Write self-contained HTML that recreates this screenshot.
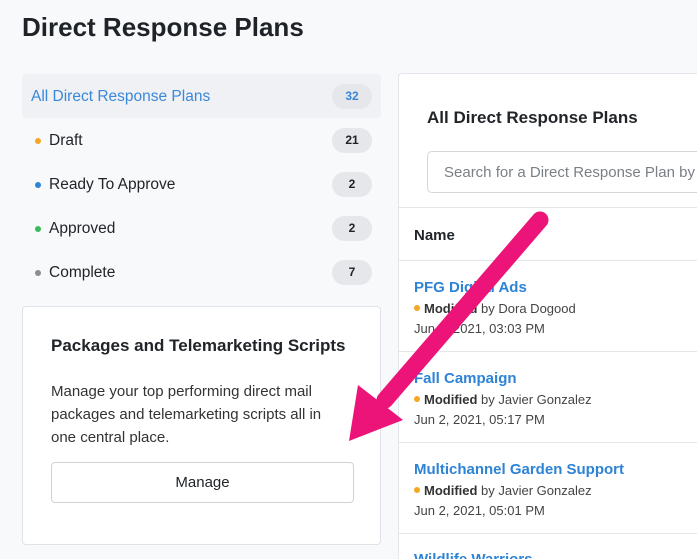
<!DOCTYPE html>
<html><head><style>
*{box-sizing:border-box;margin:0;padding:0}
html{width:697px;height:559px;overflow:hidden}
body{width:697px;height:559px;overflow:hidden;background:#f8f9fb;font-family:"Liberation Sans",sans-serif;color:#212529;position:relative}
h1{position:absolute;left:22px;top:12px;font-size:26px;font-weight:bold;color:#1f2328}
.item{position:absolute;left:22px;width:359px;height:44px;font-size:15.5px}
.item .t{position:absolute;left:27px;top:14px}
.item .d{position:absolute;left:13px;top:20px;width:6px;height:6px;border-radius:50%}
.badge{position:absolute;right:9px;top:10px;width:40px;height:25px;border-radius:13px;background:#e5e7ea;font-size:12px;font-weight:bold;text-align:center;line-height:25px;color:#222}
.card{position:absolute;left:22px;top:306px;width:359px;height:239px;background:#fff;border:1px solid #dfe2e6;border-radius:4px}
.panel{position:absolute;left:398px;top:73px;width:299px;height:486px;background:#fff;border:1px solid #e3e6ea;border-right:none;border-bottom:none;border-radius:4px 0 0 0;overflow:hidden}
.row{position:absolute;left:0;width:299px;border-top:1px solid #e3e6ea}
.nm{position:absolute;left:15px;font-size:15px;font-weight:bold;color:#2d83d6;white-space:nowrap}
.mod{position:absolute;left:15px;font-size:13px;color:#444;white-space:nowrap}
.mod b{color:#333}
.dot{display:inline-block;width:6px;height:6px;border-radius:50%;background:#f5a623;margin-right:4px;vertical-align:2px}
</style></head><body>
<h1>Direct Response Plans</h1>
<div class="item" style="top:74px;background:#eff1f4;border-radius:4px"><span class="t" style="left:9px;color:#3b87d9">All Direct Response Plans</span><span class="badge" style="color:#3b87d9">32</span></div>
<div class="item" style="top:118px"><span class="d" style="background:#f5a623"></span><span class="t">Draft</span><span class="badge">21</span></div>
<div class="item" style="top:162px"><span class="d" style="background:#2d83d6"></span><span class="t">Ready To Approve</span><span class="badge">2</span></div>
<div class="item" style="top:206px"><span class="d" style="background:#3cb95a"></span><span class="t">Approved</span><span class="badge">2</span></div>
<div class="item" style="top:250px"><span class="d" style="background:#8a8d91"></span><span class="t">Complete</span><span class="badge">7</span></div>
<div class="card">
<div style="position:absolute;left:28px;top:29px;font-size:17px;font-weight:bold">Packages and Telemarketing Scripts</div>
<div style="position:absolute;left:28px;top:73px;width:285px;font-size:15px;line-height:23px;color:#333">Manage your top performing direct mail packages and telemarketing scripts all in one central place.</div>
<div style="position:absolute;left:28px;top:155px;width:303px;height:41px;border:1px solid #ced3d8;border-radius:4px;text-align:center;line-height:40px;font-size:15px">Manage</div>
</div>
<div class="panel">
<div style="position:absolute;left:28px;top:34px;font-size:17px;font-weight:bold">All Direct Response Plans</div>
<div style="position:absolute;left:28px;top:77px;width:290px;height:42px;border:1px solid #d3d7dc;border-right:none;border-radius:5px 0 0 5px;font-size:15px;color:#7b8086;padding:12px 0 0 16px;white-space:nowrap;overflow:hidden">Search for a Direct Response Plan by</div>
<div class="row" style="top:133px;height:53px"><span style="position:absolute;left:15px;top:19px;font-size:15px;font-weight:bold">Name</span></div>
<div class="row" style="top:186px;height:91px"><span class="nm" style="top:18px">PFG Digital Ads</span><span class="mod" style="top:40px"><span class="dot"></span><b>Modified</b> by Dora Dogood</span><span class="mod" style="top:60px">Jun 6, 2021, 03:03 PM</span></div>
<div class="row" style="top:277px;height:91px"><span class="nm" style="top:18px">Fall Campaign</span><span class="mod" style="top:40px"><span class="dot"></span><b>Modified</b> by Javier Gonzalez</span><span class="mod" style="top:60px">Jun 2, 2021, 05:17 PM</span></div>
<div class="row" style="top:368px;height:91px"><span class="nm" style="top:18px">Multichannel Garden Support</span><span class="mod" style="top:40px"><span class="dot"></span><b>Modified</b> by Javier Gonzalez</span><span class="mod" style="top:60px">Jun 2, 2021, 05:01 PM</span></div>
<div class="row" style="top:459px;height:40px"><span class="nm" style="top:17px">Wildlife Warriors</span></div>
</div>
<svg width="697" height="559" style="position:absolute;left:0;top:0">
<line x1="540" y1="220" x2="385" y2="400" stroke="#ec1479" stroke-width="17" stroke-linecap="round"/>
<polygon points="349,441 358,385 403,420" fill="#ec1479"/>
</svg>
</body></html>
